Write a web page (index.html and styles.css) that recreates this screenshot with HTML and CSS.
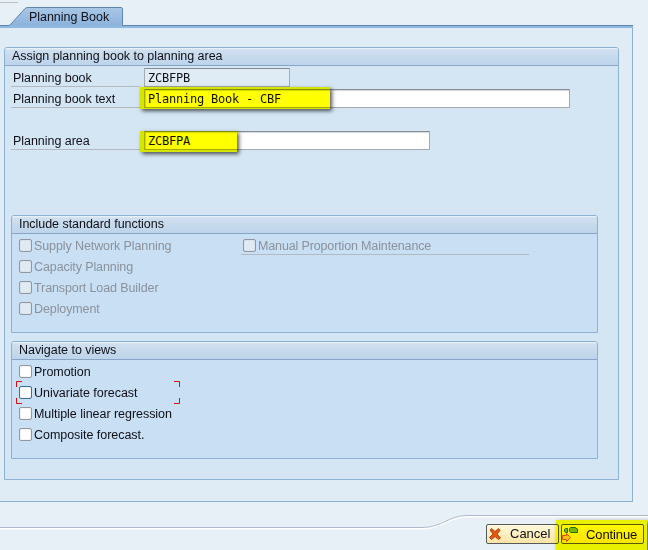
FILE: index.html
```html
<!DOCTYPE html>
<html lang="en">
<head>
<meta charset="utf-8">
<title>Planning Book</title>
<link rel="stylesheet" href="styles.css">
</head>
<body>
<main class="window">
  <header class="tabs">
    <svg class="tab-shape" width="648" height="29" viewBox="0 0 648 29" aria-hidden="true">
      <defs><linearGradient id="tab" x1="0" y1="0" x2="0" y2="1"><stop offset="0" stop-color="#a9c7e6"/><stop offset="1" stop-color="#8db3dc"/></linearGradient></defs>
      <path d="M0 2.5H18" stroke="#c0c0c0"/>
      <path d="M0 26.5H633" stroke="#8fb8e0" stroke-width="3"/>
      <path d="M0 25.500H8Q9.500 25.500 11 24L25 8.500Q26 7.500 28 7.500H121Q122.500 7.500 122.500 9V25.500H633" fill="url(#tab)" stroke="#5d86b2"/>
    </svg>
    <span class="tab-label">Planning Book</span>
  </header>
  <section class="page">
    <section class="group book">
      <h2>Assign planning book to planning area</h2>
      <div class="fields">
        <div class="row"><label>Planning book</label><div class="input readonly">ZCBFPB</div></div>
        <div class="row"><label>Planning book text</label><div class="input text">Planning Book - CBF<i class="mark mark-text"></i></div></div>
        <div class="row area"><label>Planning area</label><div class="input plan">ZCBFPA<i class="mark mark-area"></i></div></div>
      </div>
      <section class="group inner">
        <h2>Include standard functions</h2>
        <div class="checks two disabled">
          <div class="column">
            <div class="check"><i class="box"></i><span>Supply Network Planning</span></div>
            <div class="check"><i class="box"></i><span>Capacity Planning</span></div>
            <div class="check"><i class="box"></i><span>Transport Load Builder</span></div>
            <div class="check"><i class="box"></i><span>Deployment</span></div>
          </div>
          <div class="check manual"><i class="box"></i><span>Manual Proportion Maintenance</span></div>
        </div>
      </section>
      <section class="group inner">
        <h2>Navigate to views</h2>
        <div class="checks">
          <div class="check"><i class="box"></i><span>Promotion</span></div>
          <div class="check focused"><i class="box"></i><span>Univariate forecast</span>
            <svg class="corners" width="164" height="23" viewBox="0 0 164 23" aria-hidden="true"><path d="M.5 6V.5H6M158 .5H163.500V6M.5 17V22.500H6M158 22.500H163.500V17" fill="none" stroke="#e00a0a"/></svg>
          </div>
          <div class="check"><i class="box"></i><span>Multiple linear regression</span></div>
          <div class="check"><i class="box"></i><span>Composite forecast.</span></div>
        </div>
      </section>
    </section>
  </section>
  <footer class="footer">
    <svg class="footer-line" width="648" height="20" viewBox="0 0 648 20" aria-hidden="true">
      <path d="M0 14.500H422C442 14.500 449 2.500 467 2.500H648" fill="none" stroke="#fff" stroke-width="2"/>
      <path d="M0 13.500H422C442 13.500 449 1.500 467 1.500H648" fill="none" stroke="#adbac9"/>
    </svg>
    <div class="btn cancel">
      <svg width="12" height="12" viewBox="0 0 12 12" aria-hidden="true"><path d="M1 2 2.500 .5 6 3.500 9.500 .5 11 2.500 8 6 11.500 10 9.500 11.500 6 8.500 2.500 11.500 .5 9.500 4 6Z" fill="#e7580e" stroke="#a73b10" stroke-width=".9"/></svg>
      <span>Cancel</span>
    </div>
    <div class="btn continue">
      <svg width="17" height="16" viewBox="0 0 17 16" aria-hidden="true"><path d="M3.500 2.500H5.500V6.500H3.500L2.500 5.500V3.500Z" fill="#75b82c" stroke="#246b20"/><path d="M8.500 1.500H13L15.500 3V6.500H9L7.500 5.500V2.500Z" fill="#79b82f" stroke="#246b20"/><path d="M.5 9.500H4.500V7.500L8.500 11.500 4.500 15.500V13.500H.5Z" fill="#ffc52b" stroke="#dc5112"/></svg>
      <span>Continue</span><i class="mark mark-continue"></i>
    </div>
  </footer>
</main>
</body>
</html>
```

FILE: styles.css
```css
* { box-sizing: border-box; }
body { margin: 0; }
.window { width: 648px; height: 550px; overflow: hidden; background: #e8f0f7; font: 12.5px/15px "Liberation Sans", sans-serif; letter-spacing: -.04px; color: #101018; }
.tabs { height: 28px; position: relative; }
.tab-shape { display: block; }
.tab-label { position: absolute; left: 29px; top: 10px; white-space: nowrap; }
.page { width: 633px; height: 474px; padding: 19px 14px 0 4px; background: #dfebf5; border: solid #8fb1d1; border-width: 0 1px 1px 0; }
.group { border: 1px solid #8fb1d1; border-radius: 3px 3px 0 0; background: #d4e6f4; }
.group h2 { height: 18px; margin: 0; padding: 1px 7px; border-bottom: 1px solid #88a5c7; border-radius: 2px 2px 0 0; background: linear-gradient(#edf5fb 0, #cfdfef 2px, #bdd4ea); font: inherit; white-space: nowrap; }
.book { width: 615px; height: 433px; }
.fields { height: 149px; padding: 2px 0 0 6px; }
.row { display: flex; height: 21px; align-items: flex-start; }
.row.area { margin-top: 21px; }
.row label { width: 129px; height: 19px; margin-right: 4px; padding: 3px 0 0 2px; border-bottom: 1px solid #b3b9c0; }
.input { position: relative; height: 19px; border: 1px solid #a5aab0; border-top-color: #858b92; border-radius: 1px; background: #fff; box-shadow: inset 1px 1px 1px #d4d8dc; padding: 2px 3px 0; font: 12px/15px "DejaVu Sans Mono", monospace; letter-spacing: -.22px; white-space: nowrap; }
.readonly { width: 146px; background: #dfebf5; box-shadow: none; }
.text { width: 426px; }
.plan { width: 286px; }
.mark { position: absolute; background: #ff0; mix-blend-mode: multiply; box-shadow: 2px 2px 4px #555; }
.mark-text { left: -5px; top: -3px; width: 190px; height: 22px; }
.mark-area { left: -5px; top: -1px; width: 97px; height: 21px; }
.inner { width: 587px; height: 118px; margin: 0 0 8px 6px; background: #c8dff4; }
.checks { padding: 2px 0 0 7px; }
.two { display: flex; }
.column { width: 222px; }
.check { position: relative; display: flex; height: 21px; padding-top: 3px; white-space: nowrap; }
.box { width: 13px; height: 13px; margin-right: 2px; border: 1px solid #92989f; border-radius: 2px; background: #fff; box-shadow: inset 0 0 1px #aaa; }
.disabled { color: #8b929c; letter-spacing: -.1px; }
.disabled .box { background: #e0eaf3; }
.manual { width: 288px; height: 19px; padding-left: 2px; border-bottom: 1px solid #b3b9c0; letter-spacing: -.14px; }
.focused .box { border-color: #3b6da5; }
.corners { position: absolute; left: -3px; top: -2px; }
.footer { position: relative; display: flex; height: 48px; padding: 22px 0 0 486px; }
.footer-line { position: absolute; left: 0; top: 12px; }
.btn { position: relative; display: flex; height: 20px; border: 1px solid #56595a; border-radius: 2px; font-size: 13px; line-height: 17px; letter-spacing: 0; white-space: nowrap; }
.cancel { width: 73px; padding: 0 0 0 2px; background: linear-gradient(#fff9dc, #fbe4a5); }
.cancel svg { margin-top: 3px; }
.cancel span { margin-left: 9px; }
.continue { width: 83px; margin-left: 2px; padding: 1px 0 0; background: linear-gradient(#fff9dc, #fbe4a5); }
.continue span { margin-left: 7px; letter-spacing: -.1px; }
.mark-continue { left: -6px; top: -5px; width: 91px; height: 33px; }
```
